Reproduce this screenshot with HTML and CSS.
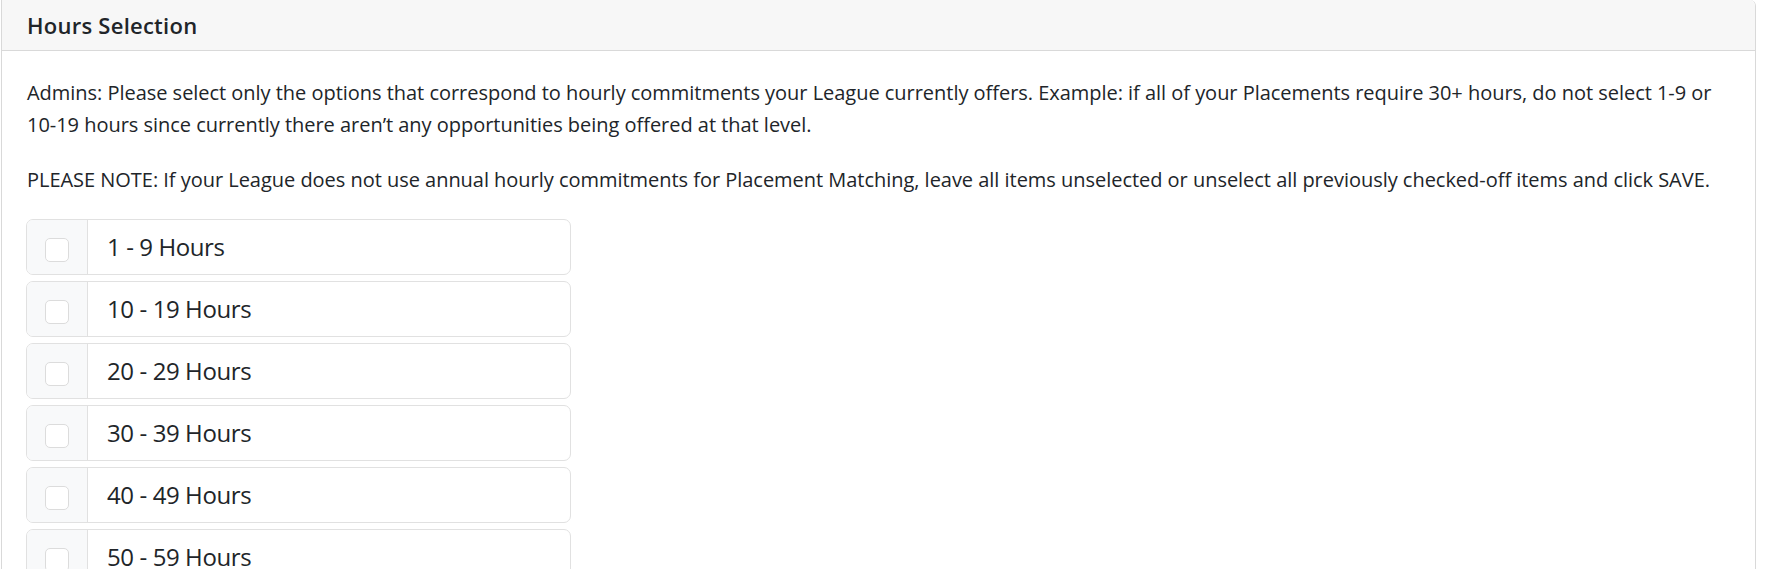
FILE: index.html
```html
<!DOCTYPE html>
<html lang="en">
<head>
<meta charset="utf-8">
<title>Hours Selection</title>
<link rel="stylesheet" href="styles.css">
</head>
<body>
<div class="card">
  <div class="card-header"><h5 class="card-title">Hours Selection</h5></div>
  <div class="card-body">
    <p>Admins: Please select only the options that correspond to hourly commitments your League currently offers. Example: if all of your Placements require 30+ hours, do not select 1-9 or 10-19 hours since currently there aren’t any opportunities being offered at that level.</p>
    <p>PLEASE NOTE: If your League does not use annual hourly commitments for Placement Matching, leave all items unselected or unselect all previously checked-off items and click SAVE.</p>
    <ul class="hours-list">
      <li class="hours-row"><span class="check-cell"><span class="check-box"></span></span><span class="hours-label">1 - 9 Hours</span></li>
      <li class="hours-row"><span class="check-cell"><span class="check-box"></span></span><span class="hours-label">10 - 19 Hours</span></li>
      <li class="hours-row"><span class="check-cell"><span class="check-box"></span></span><span class="hours-label">20 - 29 Hours</span></li>
      <li class="hours-row"><span class="check-cell"><span class="check-box"></span></span><span class="hours-label">30 - 39 Hours</span></li>
      <li class="hours-row"><span class="check-cell"><span class="check-box"></span></span><span class="hours-label">40 - 49 Hours</span></li>
      <li class="hours-row"><span class="check-cell"><span class="check-box"></span></span><span class="hours-label">50 - 59 Hours</span></li>
    </ul>
  </div>
</div>
</body>
</html>
```

FILE: styles.css
```css
html, body {
  margin: 0;
  padding: 0;
  background: #ffffff;
  overflow: hidden;
}

body {
  font-family: "Open Sans", "Noto Sans", sans-serif;
  color: #212529;
}

.card {
  margin: 0 0 0 1px;
  width: 1755px;
  box-sizing: border-box;
  border: 1px solid #d9d9d9;
  border-top: none;
  border-radius: 0 6px 6px 6px;
  background: #ffffff;
}

.card-header {
  height: 51px;
  box-sizing: border-box;
  padding: 0 25px;
  display: flex;
  align-items: center;
  background: #f7f7f7;
  border-bottom: 1px solid #d9d9d9;
  border-radius: 0 6px 0 0;
}

.card-title {
  margin: 0;
  font-size: 22px;
  font-weight: 600;
  letter-spacing: 0.25px;
  line-height: 30px;
}

.card-body {
  padding: 26px 25px 25px 24px;
}

.card-body p {
  margin: 0 0 23px 1px;
  font-size: 20px;
  line-height: 32px;
  letter-spacing: -0.03px;
}

.hours-list {
  list-style: none;
  margin: 0;
  padding: 0;
}

.hours-row {
  display: flex;
  width: 545px;
  height: 56px;
  box-sizing: border-box;
  margin-bottom: 6px;
  border: 1px solid #e1e1e1;
  border-radius: 7px;
  overflow: hidden;
}

.check-cell {
  width: 61px;
  flex: none;
  display: flex;
  justify-content: center;
  padding-top: 18px;
  box-sizing: border-box;
  background: #f8f9fa;
  border-right: 1px solid #e1e1e1;
}

.check-box {
  width: 24px;
  height: 24px;
  box-sizing: border-box;
  border: 1px solid #dcdcdc;
  border-radius: 5px;
  background: #ffffff;
}

.hours-label {
  display: flex;
  align-items: center;
  padding-left: 19px;
  font-size: 24px;
  letter-spacing: -0.4px;
  line-height: 36px;
}
```
